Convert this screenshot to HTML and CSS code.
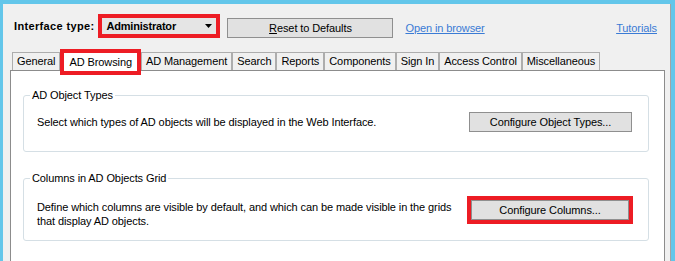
FILE: index.html
```html
<!DOCTYPE html>
<html lang="en">
<head>
<meta charset="UTF-8" />
<title>Web Interface Settings</title>
<link rel="stylesheet" href="styles.css">
</head>
<body>

<div class="window">
  <div class="toolbar">
    <span class="label">Interface type:</span>
    <div class="combo mark">
      <span>Administrator</span>
      <svg class="arrow" width="7" height="4" viewBox="0 0 7 4"><polygon points="0,0 7,0 3.5,4" fill="#000"/></svg>
    </div>
    <button class="btn reset"><u>R</u>eset to Defaults</button>
    <a class="link" href="#">Open in browser</a>
    <a class="link tutorials" href="#">Tutorials</a>
  </div>

  <div class="tabs">
    <div class="tab">General</div>
    <div class="tab active">AD Browsing</div>
    <div class="tab">AD Management</div>
    <div class="tab">Search</div>
    <div class="tab">Reports</div>
    <div class="tab">Components</div>
    <div class="tab">Sign In</div>
    <div class="tab">Access Control</div>
    <div class="tab">Miscellaneous</div>
  </div>

  <div class="panel">
    <div class="group">
      <div class="group-title">AD Object Types</div>
      <div class="group-row">
        <p class="group-text">Select which types of AD objects will be displayed in the Web Interface.</p>
        <button class="btn config">Configure Object Types...</button>
      </div>
    </div>

    <div class="group second">
      <div class="group-title">Columns in AD Objects Grid</div>
      <div class="group-row top">
        <p class="group-text">Define which columns are visible by default, and which can be made visible in the grids that display AD objects.</p>
        <button class="btn config columns">Configure Columns...</button>
      </div>
    </div>
  </div>
</div>

</body>
</html>
```

FILE: styles.css
```css
body {
  margin: 0;
  height: 261px;
  overflow: hidden;
  background-color: #63c6ea;
  color: #000;
  font-family: 'Liberation Sans', Arial, sans-serif;
  font-size: 11px;
  letter-spacing: -0.1px;
}

.window {
  margin: 4px 4px 0 3px;
  height: 257px;
  background-color: #f0f0f0;
  border-right: 1px solid #a3a3a3;
}

/* top row */
.toolbar {
  display: flex;
  align-items: center;
  height: 24px;
  padding: 10px 13px 0 11px;
}

.label {
  font-weight: bold;
  letter-spacing: 0.35px;
  margin-right: 4px;
}

.combo {
  display: flex;
  align-items: center;
  justify-content: space-between;
  box-sizing: border-box;
  width: 122px;
  height: 24px;
  padding: 0 4px;
  background-color: #e5e5e5;
  font-weight: bold;
  letter-spacing: -0.2px;
}

.mark {
  border: 4px solid #ed1c24;
}

.btn {
  box-sizing: border-box;
  height: 20px;
  padding: 0;
  background-color: #e1e1e1;
  border: 1px solid #8f8f8f;
  color: #000;
  font-family: inherit;
  font-size: 11px;
  letter-spacing: inherit;
}

.reset {
  align-self: flex-end;
  width: 166px;
  margin-left: 7px;
}

.link {
  margin: 4px 0 0 12px;
  color: #3a7bd5;
}

.tutorials {
  margin-left: auto;
}

/* tabs */
.tabs {
  display: flex;
  align-items: flex-end;
  margin: 11px 0 0 9px;
}

.tab {
  box-sizing: border-box;
  height: 18px;
  line-height: 17px;
  padding: 0 4px;
  border: 1px solid #adadad;
  border-bottom: none;
  white-space: nowrap;
}

.tab.active {
  position: relative;
  z-index: 1;
  height: 26px;
  margin-bottom: -5px;
  line-height: 18px;
  padding: 0 5px;
  background-color: #fff;
  border: 4px solid #ed1c24;
}

.panel {
  height: 200px;
  margin: 0 5px 0 7px;
  background-color: #fff;
  border: 1px solid #8c8c8c;
}

/* group boxes */
.group {
  margin: 24px 15px 0 12px;
  padding: 0 16px 0 13px;
  border: 1px solid #d5dfe5;
  border-radius: 3px;
}

.group.second {
  margin-top: 26px;
}

.group-title {
  display: table;
  margin: -7px 0 0 -7px;
  padding: 0 2px;
  line-height: 13px;
  background-color: #fff;
}

.group-row {
  display: flex;
  align-items: center;
  justify-content: space-between;
  padding: 10px 0 19px;
}

.group-row.top {
  align-items: flex-start;
  padding: 15px 0 12px;
}

.group-text {
  margin: 0;
  max-width: 420px;
  line-height: 14px;
}

.config {
  width: 163px;
}

.config.columns {
  width: 158px;
  margin-right: 3px;
  outline: 4px solid #ed1c24;
}
```
